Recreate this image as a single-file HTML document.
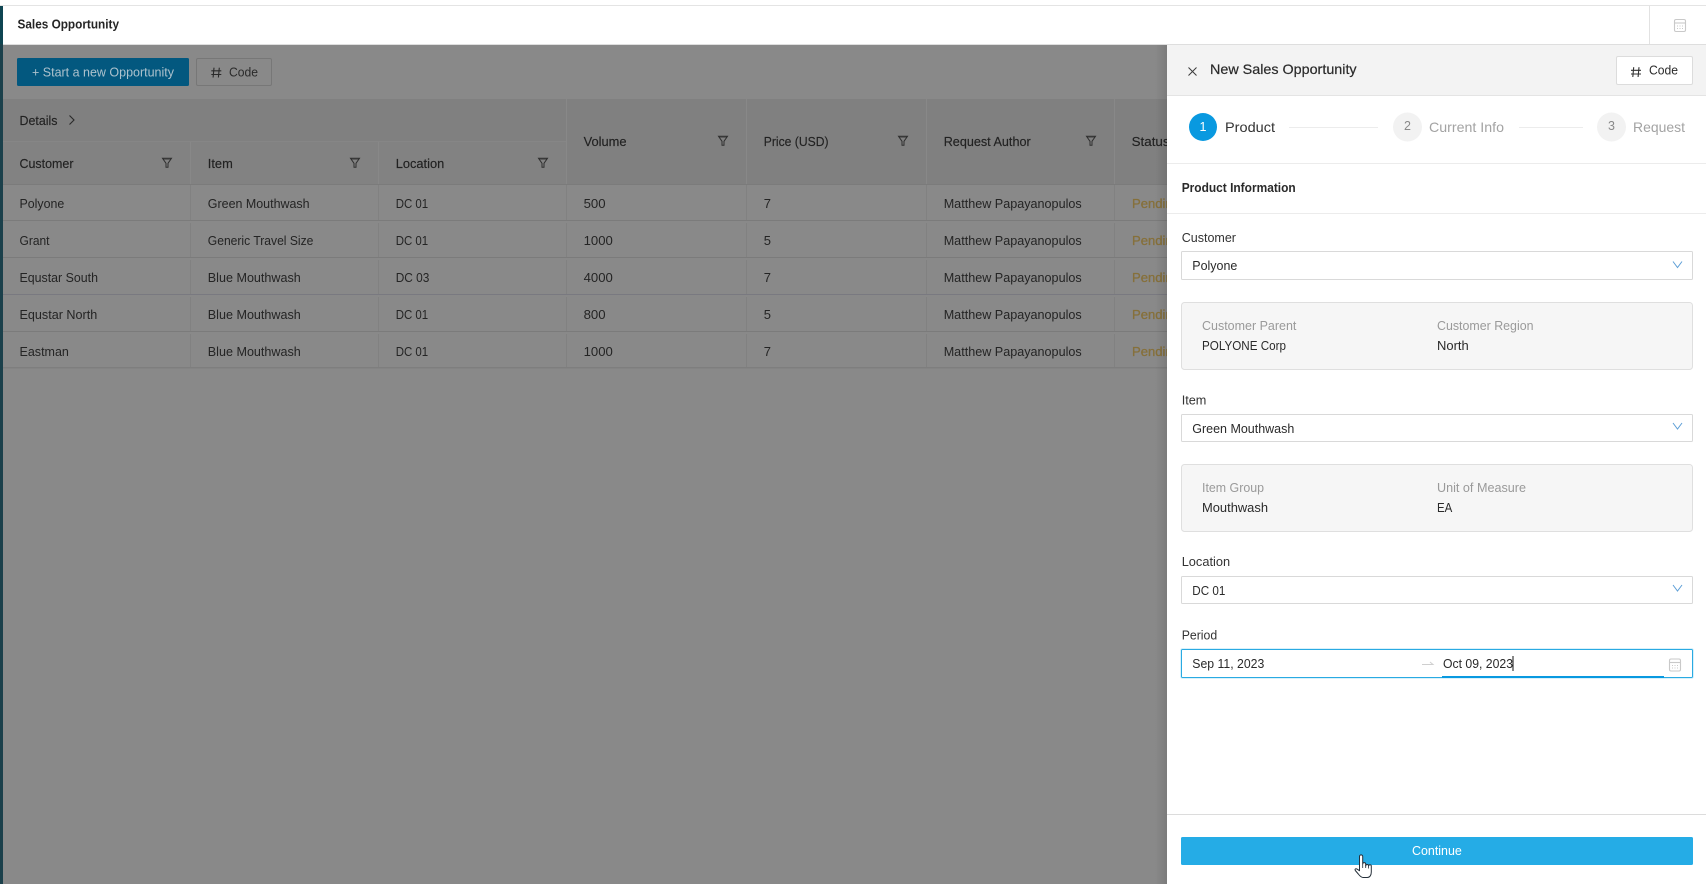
<!DOCTYPE html>
<html lang="en">
<head>
<meta charset="utf-8">
<title>Sales Opportunity</title>
<style>
html,body{margin:0;padding:0;width:1706px;height:884px;overflow:hidden;background:#fff}
svg{display:block;position:absolute;left:0;top:0}
text{font-family:"Liberation Sans",Arial,sans-serif;font-size:13px;fill:#2a2a2a;white-space:pre}
.m{stroke:#2a2a2a;stroke-width:.2px}
.b{font-weight:700}
.t{fill:#242424}
.h{fill:#222;stroke:#222;stroke-width:.15px}
.g{fill:#a3a3a3}
.l{fill:#9a9a9a}
.d{fill:#333}
.p{fill:#86703a;stroke:#86703a;stroke-width:.3px}
</style>
</head>
<body>
<svg width="1706" height="884" viewBox="0 0 1706 884" xmlns="http://www.w3.org/2000/svg">
<defs>
<linearGradient id="sh" x1="0" x2="1" y1="0" y2="0"><stop offset="0" stop-color="#000" stop-opacity="0"/><stop offset="1" stop-color="#000" stop-opacity=".1"/></linearGradient>
<g id="f" fill="none" stroke="#2f2f2f" stroke-width="1"><path d="M-4.500-4.500h9L1 .5V4.500H-1V.5z"/><path d="M-4-3.700h8" stroke-width=".7"/></g>
<g id="hash" fill="none" stroke-width="1.100"><path d="M-2.300-4.800-3.200 5M3-4.800 2.100 5M-5-1.700h10M-5 2h10"/></g>
<g id="cal" fill="none" stroke="#c9c9c9" stroke-width="1.100"><rect x="-5.500" y="-6" width="11" height="12" rx="1.500"/><path d="M-5.500-2.500h11"/><path d="M-3 0.500h1M-.5 0.500h1M2 0.500h1M-3 3h1M-.5 3h1M2 3h1" stroke-width=".9"/></g>
<path id="chev" d="M0 0 4.500 6 9 0" fill="none" stroke="#5e9fd6" stroke-width="1"/>
</defs>

<!-- top chrome -->
<rect width="1706" height="884" fill="#898989"/>
<rect width="1706" height="5" fill="#fff"/>
<rect y="5" width="1706" height="1" fill="#e4e4e4"/>
<rect y="6" width="1706" height="38" fill="#fff"/>
<rect y="44" width="1706" height="1" fill="#dedede"/>
<rect x="0" y="6" width="3" height="878" fill="#1b404b"/>
<rect x="0" y="6" width="3" height="38" fill="#0f4552"/>
<rect x="1649" y="6" width="1" height="38" fill="#e2e2e2"/>
<use href="#cal" x="1680" y="25.500"/>
<text class="b" x="17.500" y="28.500" textLength="101.500" lengthAdjust="spacingAndGlyphs" style="fill:#252525">Sales Opportunity</text>

<!-- toolbar -->
<rect x="17" y="58" width="172" height="28" rx="1.500" fill="#03587f"/>
<text x="32" y="76.500" textLength="142" lengthAdjust="spacingAndGlyphs" style="fill:#adc2cd">+ Start a new Opportunity</text>
<rect x="196.500" y="58.500" width="75" height="27" rx="1.500" fill="#898989" stroke="#777"/>
<use href="#hash" x="216.300" y="72.500" stroke="#2a2a2a"/>
<text x="229" y="76.500" textLength="29" lengthAdjust="spacingAndGlyphs">Code</text>

<!-- table header -->
<rect x="3" y="99" width="1164" height="85" fill="#808080"/>
<rect x="3" y="141" width="563" height="1" fill="#868686"/>
<rect x="3" y="142" width="563" height="42" fill="#828282"/>
<rect x="190" y="142" width="1" height="42" fill="#888"/>
<rect x="378" y="142" width="1" height="42" fill="#888"/>
<rect x="566" y="99" width="1" height="85" fill="#888"/>
<rect x="746" y="99" width="1" height="85" fill="#888"/>
<rect x="926" y="99" width="1" height="85" fill="#888"/>
<rect x="1114" y="99" width="1" height="85" fill="#888"/>

<text class="h" x="19.500" y="125" textLength="38" lengthAdjust="spacingAndGlyphs">Details</text>
<path d="M69.500 115.500 74 120 69.500 124.500" fill="none" stroke="#2a2a2a" stroke-width="1.100"/>
<text class="h" x="19.500" y="168" textLength="54" lengthAdjust="spacingAndGlyphs">Customer</text>
<use href="#f" x="167" y="162.800"/>
<text class="h" x="207.800" y="168" textLength="25" lengthAdjust="spacingAndGlyphs">Item</text>
<use href="#f" x="355" y="162.800"/>
<text class="h" x="395.700" y="168" textLength="48.600" lengthAdjust="spacingAndGlyphs">Location</text>
<use href="#f" x="543" y="162.800"/>
<text class="h" x="583.600" y="146" textLength="43" lengthAdjust="spacingAndGlyphs">Volume</text>
<use href="#f" x="723" y="140.800"/>
<text class="h" x="763.800" y="146" textLength="64.700" lengthAdjust="spacingAndGlyphs">Price (USD)</text>
<use href="#f" x="903" y="140.800"/>
<text class="h" x="943.700" y="146" textLength="87" lengthAdjust="spacingAndGlyphs">Request Author</text>
<use href="#f" x="1091" y="140.800"/>
<text class="h" x="1131.600" y="146" textLength="38" lengthAdjust="spacingAndGlyphs">Status</text>

<!-- rows -->
<g fill="#7b7b7b">
<rect x="3" y="184" width="1164" height="1"/>
<rect x="3" y="220" width="1164" height="1"/>
<rect x="3" y="257" width="1164" height="1"/>
<rect x="3" y="294" width="1164" height="1" fill="#797980"/>
<rect x="3" y="331" width="1164" height="1"/>
<rect x="3" y="367" width="1164" height="1.500" fill="#7e7e7e"/>
</g>
<g fill="#818181">
<path d="M190 185h1v35h-1zM378 185h1v35h-1zM566 185h1v35h-1zM746 185h1v35h-1zM926 185h1v35h-1zM1114 185h1v35h-1z"/>
<path d="M190 223h1v34h-1zM378 223h1v34h-1zM566 223h1v34h-1zM746 223h1v34h-1zM926 223h1v34h-1zM1114 223h1v34h-1z"/>
<path d="M190 260h1v34h-1zM378 260h1v34h-1zM566 260h1v34h-1zM746 260h1v34h-1zM926 260h1v34h-1zM1114 260h1v34h-1z"/>
<path d="M190 297h1v34h-1zM378 297h1v34h-1zM566 297h1v34h-1zM746 297h1v34h-1zM926 297h1v34h-1zM1114 297h1v34h-1z"/>
<path d="M190 334h1v33h-1zM378 334h1v33h-1zM566 334h1v33h-1zM746 334h1v33h-1zM926 334h1v33h-1zM1114 334h1v33h-1z"/>
</g>

<g class="rows">
<text class="t" x="19.500" y="208" textLength="44.800" lengthAdjust="spacingAndGlyphs">Polyone</text>
<text class="t" x="207.800" y="208" textLength="101.800" lengthAdjust="spacingAndGlyphs">Green Mouthwash</text>
<text class="t" x="395.700" y="208" textLength="32.500" lengthAdjust="spacingAndGlyphs">DC 01</text>
<text class="t" x="583.600" y="208" textLength="22" lengthAdjust="spacingAndGlyphs">500</text>
<text class="t" x="763.800" y="208">7</text>
<text class="t" x="943.700" y="208" textLength="138" lengthAdjust="spacingAndGlyphs">Matthew Papayanopulos</text>
<text class="p" x="1132" y="208" textLength="48" lengthAdjust="spacingAndGlyphs">Pending</text>

<text class="t" x="19.500" y="245" textLength="30" lengthAdjust="spacingAndGlyphs">Grant</text>
<text class="t" x="207.800" y="245" textLength="105.600" lengthAdjust="spacingAndGlyphs">Generic Travel Size</text>
<text class="t" x="395.700" y="245" textLength="32.500" lengthAdjust="spacingAndGlyphs">DC 01</text>
<text class="t" x="583.600" y="245" textLength="29.200" lengthAdjust="spacingAndGlyphs">1000</text>
<text class="t" x="763.800" y="245">5</text>
<text class="t" x="943.700" y="245" textLength="138" lengthAdjust="spacingAndGlyphs">Matthew Papayanopulos</text>
<text class="p" x="1132" y="245" textLength="48" lengthAdjust="spacingAndGlyphs">Pending</text>

<text class="t" x="19.500" y="282" textLength="78.500" lengthAdjust="spacingAndGlyphs">Equstar South</text>
<text class="t" x="207.800" y="282" textLength="93" lengthAdjust="spacingAndGlyphs">Blue Mouthwash</text>
<text class="t" x="395.700" y="282" textLength="33.700" lengthAdjust="spacingAndGlyphs">DC 03</text>
<text class="t" x="583.600" y="282" textLength="29.200" lengthAdjust="spacingAndGlyphs">4000</text>
<text class="t" x="763.800" y="282">7</text>
<text class="t" x="943.700" y="282" textLength="138" lengthAdjust="spacingAndGlyphs">Matthew Papayanopulos</text>
<text class="p" x="1132" y="282" textLength="48" lengthAdjust="spacingAndGlyphs">Pending</text>

<text class="t" x="19.500" y="319" textLength="77.700" lengthAdjust="spacingAndGlyphs">Equstar North</text>
<text class="t" x="207.800" y="319" textLength="93" lengthAdjust="spacingAndGlyphs">Blue Mouthwash</text>
<text class="t" x="395.700" y="319" textLength="32.500" lengthAdjust="spacingAndGlyphs">DC 01</text>
<text class="t" x="583.600" y="319" textLength="22" lengthAdjust="spacingAndGlyphs">800</text>
<text class="t" x="763.800" y="319">5</text>
<text class="t" x="943.700" y="319" textLength="138" lengthAdjust="spacingAndGlyphs">Matthew Papayanopulos</text>
<text class="p" x="1132" y="319" textLength="48" lengthAdjust="spacingAndGlyphs">Pending</text>

<text class="t" x="19.500" y="356" textLength="49.400" lengthAdjust="spacingAndGlyphs">Eastman</text>
<text class="t" x="207.800" y="356" textLength="93" lengthAdjust="spacingAndGlyphs">Blue Mouthwash</text>
<text class="t" x="395.700" y="356" textLength="32.500" lengthAdjust="spacingAndGlyphs">DC 01</text>
<text class="t" x="583.600" y="356" textLength="29.200" lengthAdjust="spacingAndGlyphs">1000</text>
<text class="t" x="763.800" y="356">7</text>
<text class="t" x="943.700" y="356" textLength="138" lengthAdjust="spacingAndGlyphs">Matthew Papayanopulos</text>
<text class="p" x="1132" y="356" textLength="48" lengthAdjust="spacingAndGlyphs">Pending</text>
</g>

<!-- panel shadow -->
<rect x="1155" y="45" width="12" height="839" fill="url(#sh)"/>

<!-- panel -->
<rect x="1167" y="45" width="539" height="839" fill="#fff"/>
<rect x="1167" y="45" width="539" height="50" fill="#f3f3f3"/>
<rect x="1167" y="95" width="539" height="1" fill="#e4e4e4"/>
<path d="M1188.500 67.500 1196.500 75.500M1196.500 67.500 1188.500 75.500" stroke="#3a3a3a" stroke-width="1" fill="none"/>
<text class="m" x="1210" y="74" style="font-size:14px" textLength="146.600" lengthAdjust="spacingAndGlyphs">New Sales Opportunity</text>
<rect x="1616.500" y="56.500" width="76" height="28" rx="1.500" fill="#fff" stroke="#dcdcdc"/>
<use href="#hash" x="1636" y="72" stroke="#333"/>
<text x="1649" y="74.500" textLength="29" lengthAdjust="spacingAndGlyphs">Code</text>

<!-- steps -->
<circle cx="1203" cy="127" r="14" fill="#0999e0"/>
<text x="1203" y="131" text-anchor="middle" style="fill:#fff;font-size:12.500px">1</text>
<text x="1225" y="132" style="font-size:14px;fill:#333" textLength="50" lengthAdjust="spacingAndGlyphs">Product</text>
<rect x="1289" y="127" width="89" height="1" fill="#ececec"/>
<circle cx="1407.500" cy="127" r="14.500" fill="#f2f2f2"/>
<text x="1407.500" y="130" text-anchor="middle" style="fill:#8a8a8a;font-size:12.500px">2</text>
<text class="g" x="1429" y="132" style="font-size:14px" textLength="75" lengthAdjust="spacingAndGlyphs">Current Info</text>
<rect x="1519" y="127" width="64" height="1" fill="#ececec"/>
<circle cx="1611.500" cy="127" r="14.500" fill="#f2f2f2"/>
<text x="1611.500" y="130" text-anchor="middle" style="fill:#8a8a8a;font-size:12.500px">3</text>
<text class="g" x="1633" y="132" style="font-size:14px" textLength="52" lengthAdjust="spacingAndGlyphs">Request</text>
<rect x="1167" y="163" width="539" height="1" fill="#ececec"/>

<text class="b" x="1181.700" y="192" textLength="114" lengthAdjust="spacingAndGlyphs" style="fill:#2a2a2a">Product Information</text>
<rect x="1167" y="213" width="539" height="1" fill="#ececec"/>

<!-- form -->
<text class="d" x="1181.700" y="242" textLength="54.300" lengthAdjust="spacingAndGlyphs">Customer</text>
<rect x="1181.500" y="251.500" width="511" height="28" rx="1" fill="#fff" stroke="#d9d9d9"/>
<text x="1192.300" y="270" textLength="45" lengthAdjust="spacingAndGlyphs">Polyone</text>
<use href="#chev" x="1673" y="261.500"/>

<rect x="1181.500" y="302.500" width="511" height="67" rx="3" fill="#f6f6f6" stroke="#dfdfdf"/>
<text class="l" x="1202" y="330" textLength="94.400" lengthAdjust="spacingAndGlyphs">Customer Parent</text>
<text x="1202" y="350" textLength="84" lengthAdjust="spacingAndGlyphs">POLYONE Corp</text>
<text class="l" x="1437" y="330" textLength="96.500" lengthAdjust="spacingAndGlyphs">Customer Region</text>
<text x="1437" y="350" textLength="31.700" lengthAdjust="spacingAndGlyphs">North</text>

<text class="d" x="1181.700" y="404.500" textLength="24.700" lengthAdjust="spacingAndGlyphs">Item</text>
<rect x="1181.500" y="414.500" width="511" height="27" rx="1" fill="#fff" stroke="#d9d9d9"/>
<text x="1192.300" y="433" textLength="102" lengthAdjust="spacingAndGlyphs">Green Mouthwash</text>
<use href="#chev" x="1673" y="423"/>

<rect x="1181.500" y="464.500" width="511" height="67" rx="3" fill="#f6f6f6" stroke="#dfdfdf"/>
<text class="l" x="1202" y="492" textLength="62" lengthAdjust="spacingAndGlyphs">Item Group</text>
<text x="1202" y="512" textLength="66" lengthAdjust="spacingAndGlyphs">Mouthwash</text>
<text class="l" x="1437" y="492" textLength="89" lengthAdjust="spacingAndGlyphs">Unit of Measure</text>
<text x="1437" y="512" textLength="15.300" lengthAdjust="spacingAndGlyphs">EA</text>

<text class="d" x="1181.700" y="566" textLength="48.400" lengthAdjust="spacingAndGlyphs">Location</text>
<rect x="1181.500" y="576.500" width="511" height="27" rx="1" fill="#fff" stroke="#d9d9d9"/>
<text x="1192.300" y="595" textLength="33" lengthAdjust="spacingAndGlyphs">DC 01</text>
<use href="#chev" x="1673" y="585"/>

<text class="d" x="1181.700" y="639.500" textLength="35.500" lengthAdjust="spacingAndGlyphs">Period</text>
<rect x="1180.500" y="648.500" width="513" height="30" rx="2" fill="none" stroke="#d8f1fb"/>
<rect x="1181.500" y="649.500" width="511" height="28" rx="1" fill="#fff" stroke="#2aaae2"/>
<text x="1192.300" y="668" textLength="72" lengthAdjust="spacingAndGlyphs">Sep 11, 2023</text>
<path d="M1422 664.500h11l-3-2.500" fill="none" stroke="#cfcfcf" stroke-width="1"/>
<text x="1443" y="668" textLength="70" lengthAdjust="spacingAndGlyphs">Oct 09, 2023</text>
<rect x="1512.500" y="656" width="1" height="15" fill="#111"/>
<rect x="1442" y="676" width="222" height="2" fill="#0999e0"/>
<use href="#cal" x="1675" y="665"/>

<!-- footer -->
<rect x="1167" y="814" width="539" height="1" fill="#dcdcdc"/>
<rect x="1181" y="837" width="512" height="28" rx="1.500" fill="#25ace6"/>
<text x="1412" y="855" textLength="49.800" lengthAdjust="spacingAndGlyphs" style="fill:#fff">Continue</text>

<!-- hand cursor -->
<path d="M1359.500 869V856.500a1.600 1.600 0 0 1 3.200 0V864a1.500 1.500 0 0 1 3 .3V866a1.400 1.400 0 0 1 2.900 0a1.300 1.300 0 0 1 2.700.3V872c0 3.200-1.500 5.500-4 5.500h-4c-2 0-3.500-1.500-5-3.500l-3-3.500c-.8-1 .2-2.200 1.500-1.600l2.700 1.800z" fill="#fff" stroke="#26303a" stroke-width="1" stroke-linejoin="round"/>
<path d="M1362.700 864v4M1365.700 865v3M1368.600 866v2.500" fill="none" stroke="#26303a" stroke-width=".8"/>
</svg>
</body>
</html>
